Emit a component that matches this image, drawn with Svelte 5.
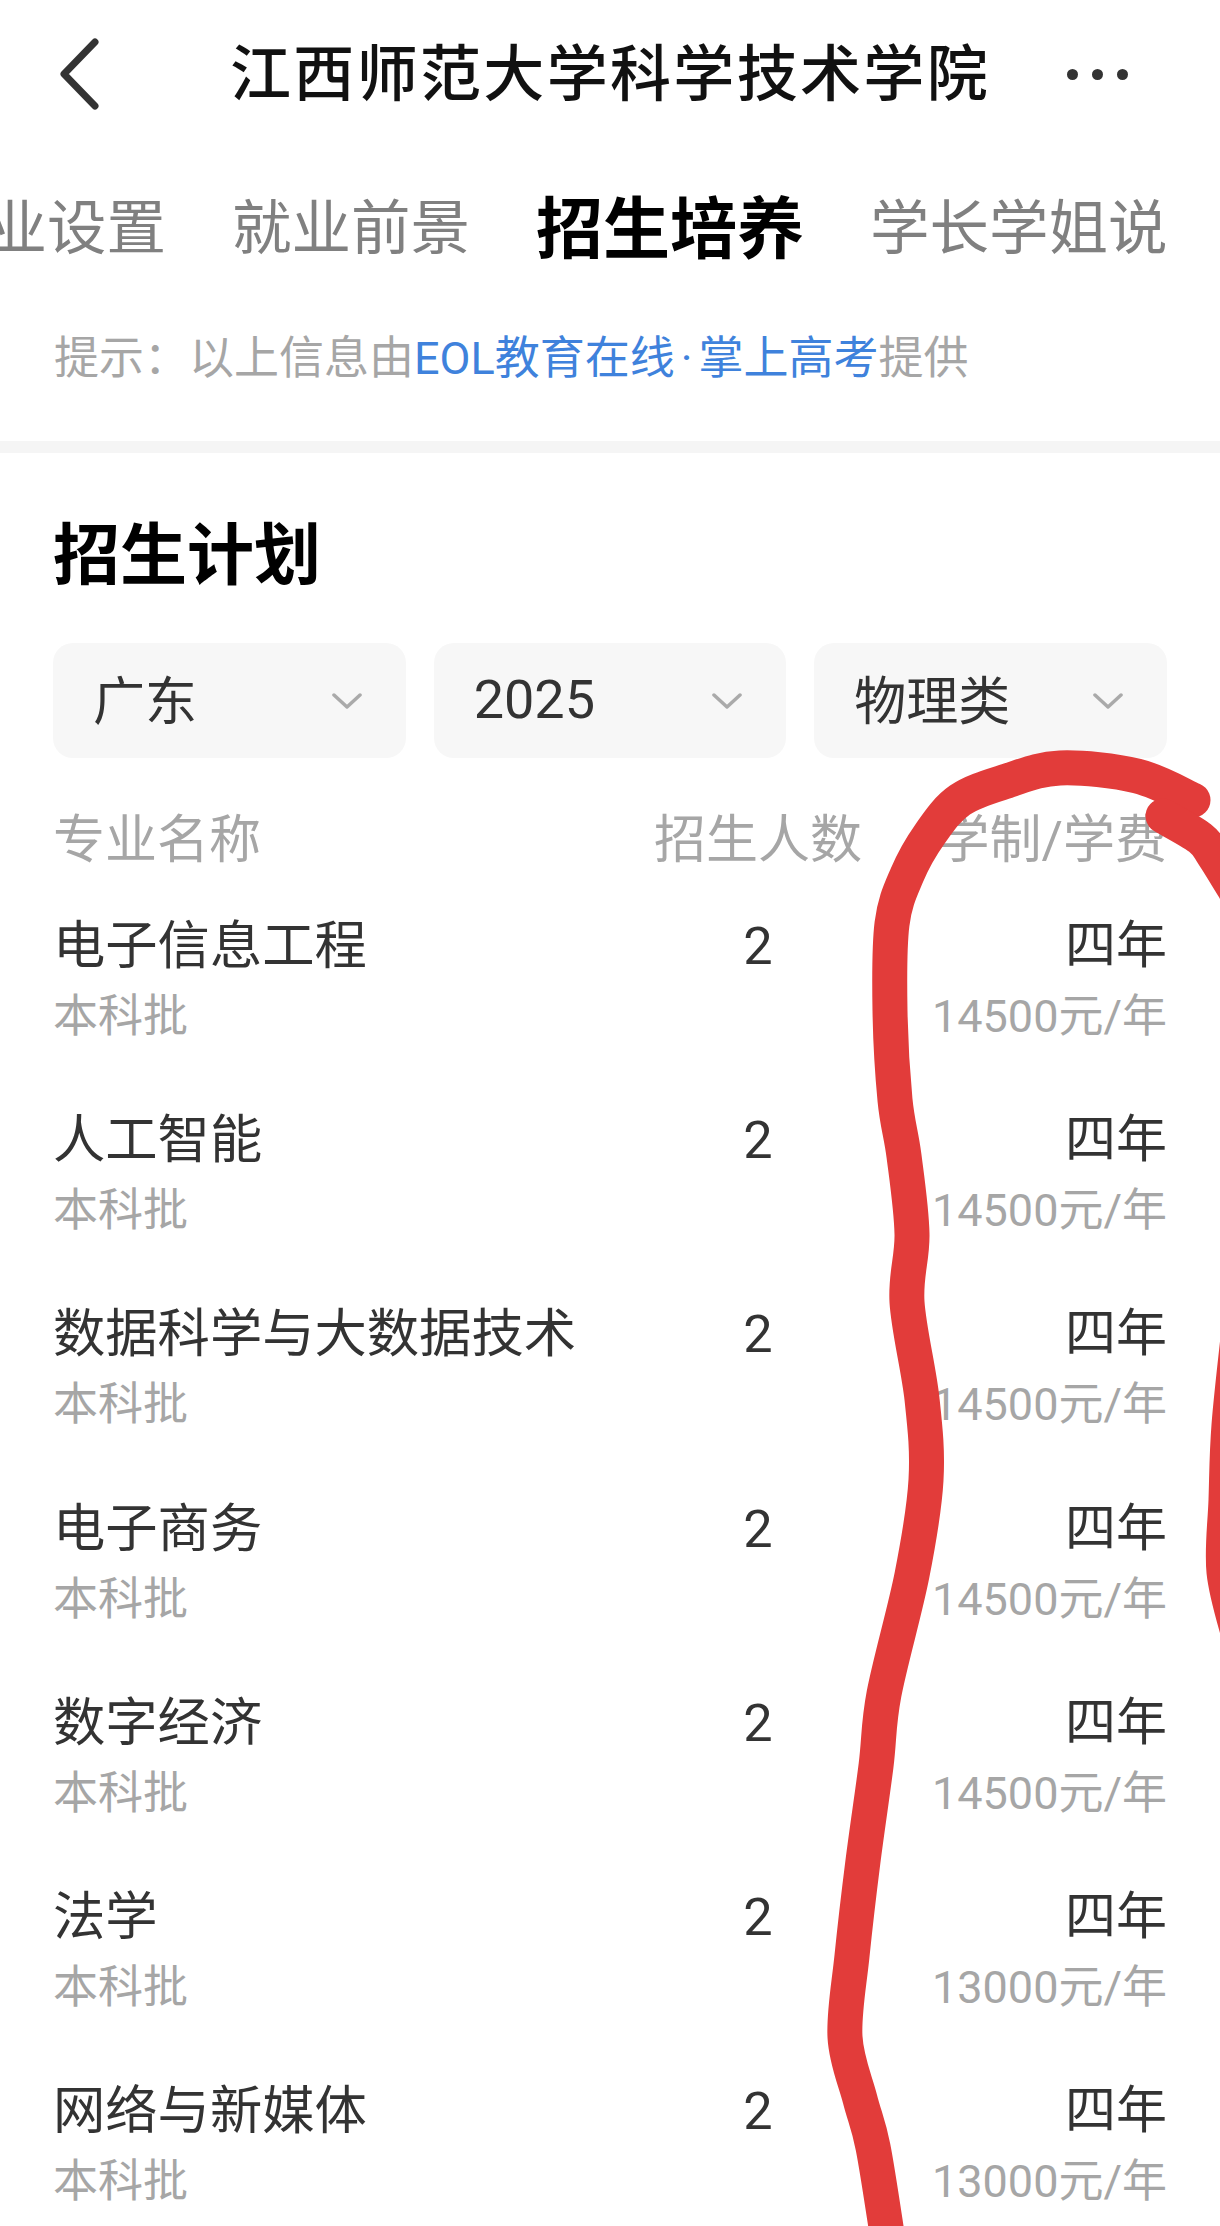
<script>
  const selects = ['广东', '2025', '物理类'];
  const rows = [
    { name: '电子信息工程', fee: '14500元/年' },
    { name: '人工智能', fee: '14500元/年' },
    { name: '数据科学与大数据技术', fee: '14500元/年' },
    { name: '电子商务', fee: '14500元/年' },
    { name: '数字经济', fee: '14500元/年' },
    { name: '法学', fee: '13000元/年' },
    { name: '网络与新媒体', fee: '13000元/年' }
  ];

  // centre line of the hand-drawn circle
  const mainStroke = [
    [1193, 800], [1137, 776], [1060, 768], [1007, 781], [960, 800], [930, 834],
    [907, 875], [892, 924], [890, 1011], [895, 1100], [904, 1156], [912, 1234], [907, 1302],
    [922, 1399], [926, 1480], [912, 1575], [884, 1694], [876, 1766], [863, 1861],
    [852, 1956], [845, 2037], [860, 2099], [873, 2147], [888, 2240]
  ];
  const tailStroke = [[1163, 816], [1200, 838], [1214, 856], [1235, 890]];
  const rightStroke = [[1240, 1320], [1229, 1425], [1226, 1500], [1224, 1572], [1240, 1640]];

  function smooth(p) {
    let d = `M${p[0][0]} ${p[0][1]}`;
    for (let i = 0; i < p.length - 1; i++) {
      const a = p[i - 1] || p[i];
      const b = p[i];
      const c = p[i + 1];
      const e = p[i + 2] || c;
      d += ` C${b[0] + (c[0] - a[0]) / 6} ${b[1] + (c[1] - a[1]) / 6} ${c[0] - (e[0] - b[0]) / 6} ${c[1] - (e[1] - b[1]) / 6} ${c[0]} ${c[1]}`;
    }
    return d;
  }
</script>

<div class="page">
  <header class="nav">
    <svg class="back" viewBox="0 0 40 74" width="40" height="74">
      <path d="M35 5 L4 37 L35 69" fill="none" stroke="#333" stroke-width="7" stroke-linecap="round" stroke-linejoin="round" />
    </svg>
    <h1>江西师范大学科学技术学院</h1>
    <div class="more"><i></i><i></i><i></i></div>
  </header>

  <nav class="tabs">
    <span class="tab">专业设置</span>
    <span class="tab">就业前景</span>
    <span class="tab active">招生培养</span>
    <span class="tab">学长学姐说</span>
  </nav>

  <p class="tip">提示：以上信息由<span class="link">EOL教育在线<span class="dot">·</span>掌上高考</span>提供</p>

  <div class="divider"></div>

  <section class="plan">
    <h2>招生计划</h2>

    <div class="filters">
      {#each selects as s}
        <div class="select">
          <span class="value" class:num={s === '2025'}>{s}</span>
          <svg viewBox="0 0 30 16" width="30" height="16">
            <path d="M2 2 L15 14 L28 2" fill="none" stroke="#aaa" stroke-width="3.5" stroke-linecap="round" stroke-linejoin="round" />
          </svg>
        </div>
      {/each}
    </div>

    <div class="row head">
      <span>专业名称</span>
      <span class="count">招生人数</span>
      <span class="right">学制/学费</span>
    </div>

    {#each rows as r}
      <div class="row item">
        <div>
          <div class="main">{r.name}</div>
          <div class="sub">本科批</div>
        </div>
        <div class="main count">2</div>
        <div class="right">
          <div class="main years">四年</div>
          <div class="sub">{r.fee}</div>
        </div>
      </div>
    {/each}
  </section>

  <!-- hand-drawn red circle on top of the screenshot -->
  <svg class="scribble" viewBox="0 0 1220 2226" width="1220" height="2226">
    <path d={smooth(mainStroke)} />
    <path d={smooth(tailStroke)} />
    <path d={smooth(rightStroke)} />
  </svg>
</div>

<style>
  :global(body) {
    margin: 0;
    background: #fff;
  }

  .page {
    position: relative;
    width: 1220px;
    height: 2226px;
    overflow: hidden;
    background: #fff;
    font-family: Roboto, "Noto Sans CJK SC", "Noto Sans", sans-serif;
  }

  .nav {
    height: 148px;
    display: grid;
    grid-template-columns: 1fr auto 1fr;
    align-items: center;
    padding: 0 92px;
  }

  .back {
    margin-left: -32px;
  }

  h1 {
    margin: -10px 0 0;
    font-size: 61px;
    font-weight: 500;
    letter-spacing: 2.33px;
    color: #111;
    white-space: nowrap;
  }

  .more {
    display: flex;
    justify-content: flex-end;
    gap: 14px;
  }

  .more i {
    width: 11px;
    height: 11px;
    border-radius: 50%;
    background: #333;
  }

  .tabs {
    display: flex;
    align-items: center;
    gap: 66px;
    height: 155px;
    padding-top: 9px;
    box-sizing: border-box;
    margin-left: -72px;
    white-space: nowrap;
  }

  .tab {
    font-size: 59.5px;
    line-height: 1;
    color: #808080;
  }

  .tab.active {
    font-size: 67px;
    font-weight: 700;
    color: #000;
  }

  .tip {
    margin: 0;
    padding: 26px 54px 0;
    height: 138px;
    box-sizing: border-box;
    font-size: 45px;
    line-height: 60px;
    color: #a6a6a6;
  }

  .link {
    color: #3f82dc;
  }

  .dot {
    padding: 0 6px;
  }

  .divider {
    height: 12px;
    background: #f5f5f5;
  }

  .plan {
    padding: 0 53px;
  }

  h2 {
    margin: 0;
    padding-top: 61px;
    font-size: 67px;
    line-height: 84px;
    font-weight: 700;
    color: #000;
  }

  .filters {
    display: grid;
    grid-template-columns: repeat(3, 1fr);
    gap: 28px;
    margin-top: 45px;
  }

  .select {
    height: 115px;
    display: flex;
    align-items: center;
    justify-content: space-between;
    padding: 0 44px 0 40px;
    border-radius: 20px;
    background: #f7f7f7;
    font-size: 52px;
    color: #333;
  }

  .value {
    margin-top: -7px;
  }

  .value.num {
    margin-top: -2px;
    font-size: 54px;
  }

  .row {
    display: grid;
    grid-template-columns: 1fr 208px 305px;
  }

  .head {
    margin-top: 51px;
    margin-bottom: 17px;
    font-size: 52px;
    line-height: 64px;
    color: #a6a6a6;
    white-space: nowrap;
  }

  .item {
    height: 194.2px;
    padding-top: 24px;
    box-sizing: border-box;
  }

  .count {
    text-align: center;
  }

  .right {
    text-align: right;
  }

  .main {
    font-size: 52.3px;
    line-height: 64px;
    color: #333;
  }

  .years {
    font-size: 51px;
  }

  .sub {
    margin-top: 9px;
    font-size: 45px;
    line-height: 60px;
    color: #a6a6a6;
  }

  .scribble {
    position: absolute;
    top: 0;
    left: 0;
    pointer-events: none;
  }

  .scribble path {
    fill: none;
    stroke: #e23c3a;
    stroke-width: 35;
    stroke-linecap: round;
  }
</style>
